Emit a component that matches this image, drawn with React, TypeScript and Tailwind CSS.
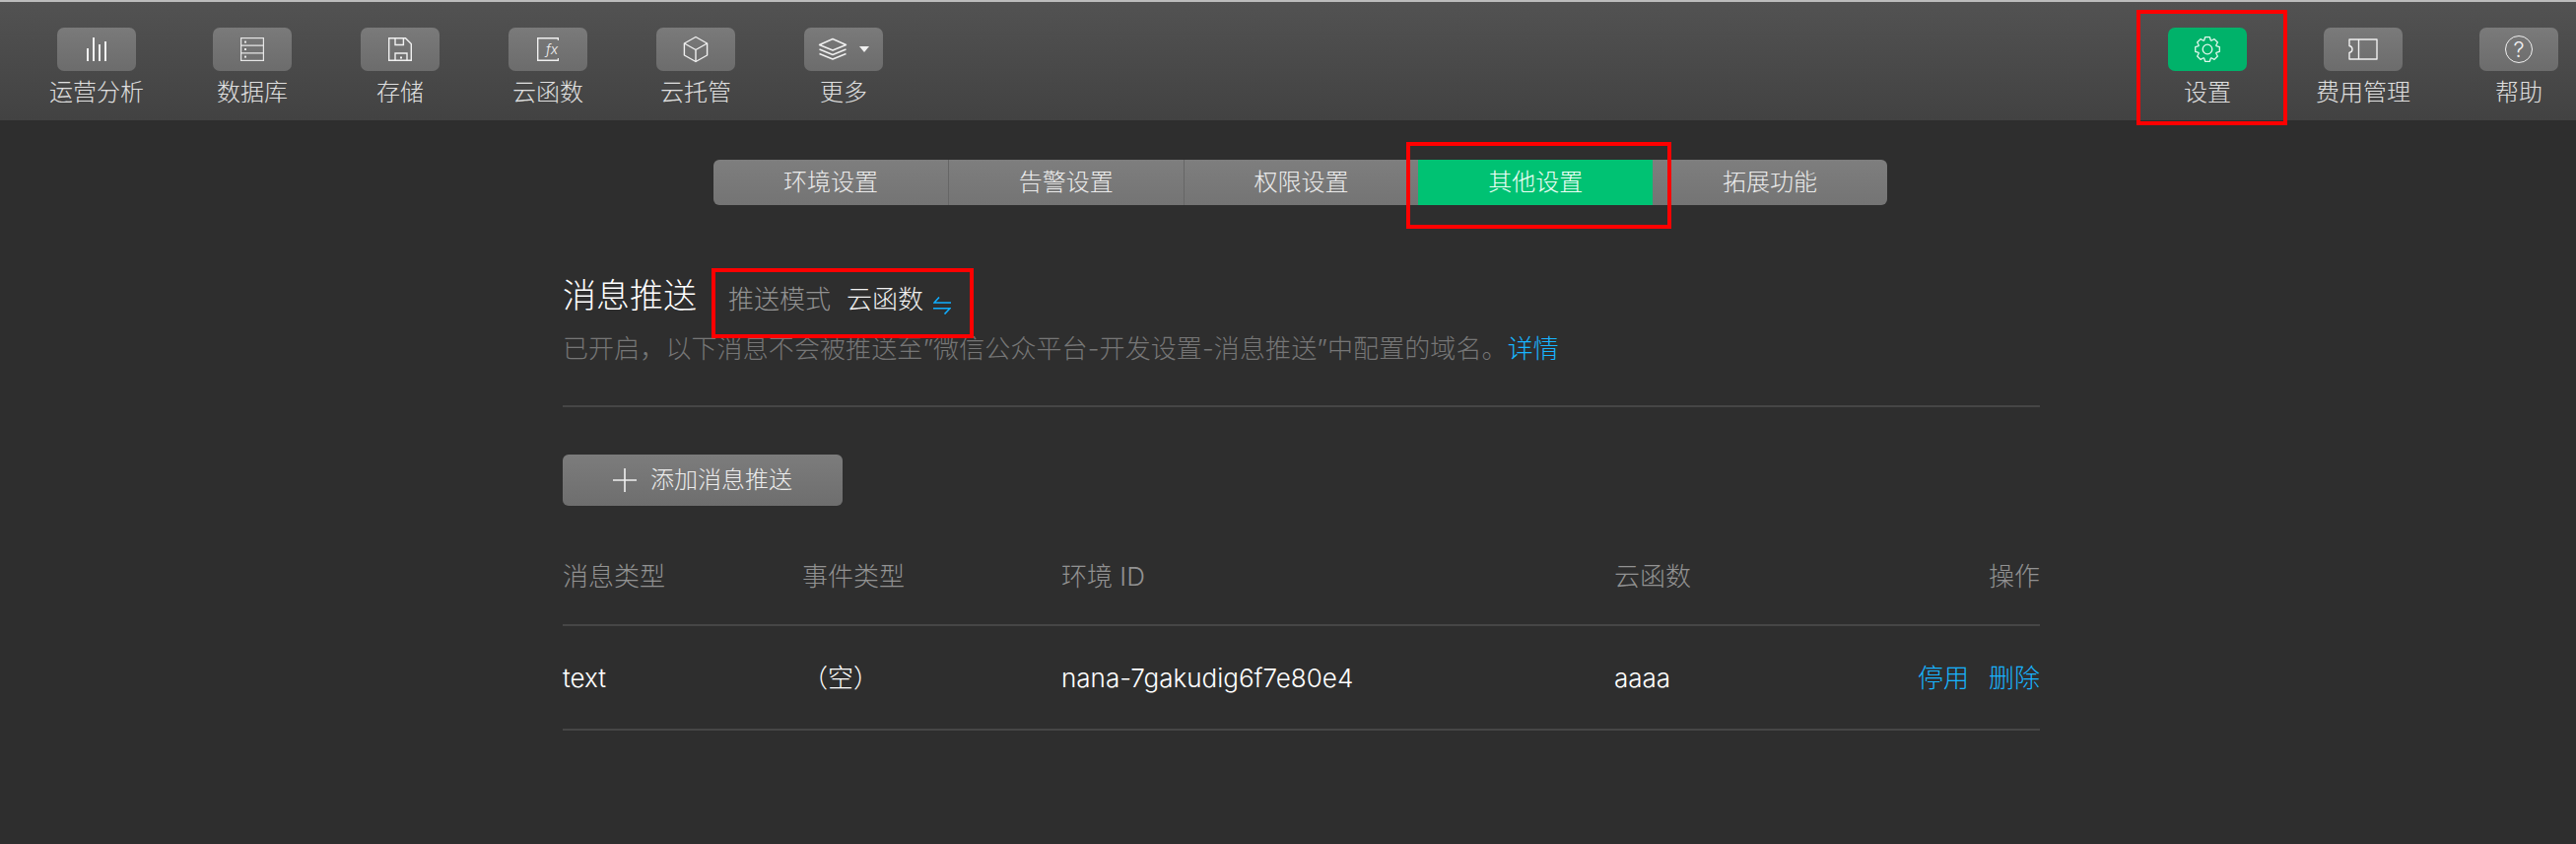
import React from 'react';

// gear outline with 8 teeth
const gearPath = () => {
  const pts: string[] = [];
  const cx = 13, cy = 13;
  for (let i = 0; i < 8; i++) {
    const a = (i * Math.PI) / 4 - Math.PI / 2;
    const spots: [number, number][] = [
      [-0.36, 9.6],
      [-0.19, 12.5],
      [0.19, 12.5],
      [0.36, 9.6],
    ];
    spots.forEach(([d, r]) => {
      pts.push(`${(cx + r * Math.cos(a + d)).toFixed(2)} ${(cy + r * Math.sin(a + d)).toFixed(2)}`);
    });
  }
  return `M${pts.join('L')}Z`;
};

const BarsIcon = () => (
  <svg width="20" height="24" viewBox="0 0 20 24" fill="#f0f0f0">
    <rect x="0" y="11" width="2" height="13" />
    <rect x="6" y="0" width="2" height="24" />
    <rect x="12" y="7" width="2" height="17" />
    <rect x="18" y="4" width="2" height="20" />
  </svg>
);

const ServerIcon = () => (
  <svg width="24" height="24" viewBox="0 0 24 24" fill="none" stroke="#e6e6e6" strokeWidth="1.2">
    <rect x="0.6" y="0.6" width="22.8" height="22.8" />
    <path d="M0.6 8.2H23.4M0.6 15.8H23.4" />
    <rect x="4" y="3.6" width="2" height="2" fill="#e6e6e6" stroke="none" />
    <rect x="4" y="11" width="2" height="2" fill="#e6e6e6" stroke="none" />
    <rect x="4" y="18.6" width="2" height="2" fill="#e6e6e6" stroke="none" />
  </svg>
);

const SaveIcon = () => (
  <svg width="24" height="24" viewBox="0 0 24 24" fill="none" stroke="#f0f0f0" strokeWidth="1.4">
    <path d="M0.7 0.7H17.5L23.3 6.5V23.3H0.7Z" />
    <path d="M7 0.7V7.5H15.4V0.7" />
    <path d="M7 23.3V16H19V23.3" />
    <rect x="12" y="19.5" width="2" height="2" fill="#f0f0f0" stroke="none" />
  </svg>
);

const FxIcon = () => (
  <div className="relative w-[22px] h-[24px]">
    <svg width="22" height="24" viewBox="0 0 22 24" fill="none" stroke="#f0f0f0" strokeWidth="1.4">
      <path d="M21.5 3V0.7H0.7V23.3H21.5V21" />
    </svg>
    <span className="absolute left-[9px] top-[3px] text-[14px] leading-[17px] italic text-[#f0f0f0]">fx</span>
  </div>
);

const CubeIcon = () => (
  <svg width="26" height="28" viewBox="0 0 26 28" fill="none" stroke="#f0f0f0" strokeWidth="1.4" strokeLinejoin="round">
    <path d="M13 1.5L24.6 8V20L13 26.5L1.4 20V8Z" />
    <path d="M1.4 8L13 14.5L24.6 8M13 14.5V26.5" />
  </svg>
);

const LayersIcon = () => (
  <svg width="30" height="24" viewBox="0 0 30 24" fill="none" stroke="#f0f0f0" strokeWidth="1.4" strokeLinejoin="round">
    <path d="M15 1.5L28.5 7.5L15 13L1.5 7.5Z" />
    <path d="M1.5 12L15 17.5L28.5 12" />
    <path d="M1.5 16.5L15 22L28.5 16.5" />
  </svg>
);

const GearIcon = () => (
  <svg width="26" height="26" viewBox="0 0 26 26" fill="none" stroke="#e4f8ee" strokeWidth="1.3" strokeLinejoin="round">
    <path d={gearPath()} />
    <circle cx="13" cy="13" r="4.8" />
  </svg>
);

const TicketIcon = () => (
  <svg width="30" height="22" viewBox="0 0 30 22" fill="none" stroke="#f0f0f0" strokeWidth="1.4" strokeLinejoin="round">
    <path d="M1 1H29V21H1V14.5C3 14 4 12.8 4 11C4 9.2 3 8 1 7.5Z" />
    <path d="M10.5 1V21" />
  </svg>
);

const HelpIcon = () => (
  <div className="w-[28px] h-[28px] rounded-full border-[1.4px] border-[#f0f0f0] flex items-center justify-center">
    <span className="text-[22px] leading-none text-[#f0f0f0]">?</span>
  </div>
);

const navLeft = [
  { label: '运营分析', icon: <BarsIcon />, wide: true },
  { label: '数据库', icon: <ServerIcon /> },
  { label: '存储', icon: <SaveIcon /> },
  { label: '云函数', icon: <FxIcon /> },
  { label: '云托管', icon: <CubeIcon /> },
  {
    label: '更多',
    icon: (
      <div className="flex items-center gap-3">
        <LayersIcon />
        <span className="w-0 h-0 border-x-[5px] border-x-transparent border-t-[6px] border-t-[#f0f0f0]" />
      </div>
    ),
  },
];

const tabs = ['环境设置', '告警设置', '权限设置', '其他设置', '拓展功能'];

const NavItem = ({ label, icon, active, wide }: { label: string; icon: React.ReactNode; active?: boolean; wide?: boolean }) => (
  <div className={`flex flex-col items-center ${wide ? 'w-[96px]' : 'w-[80px]'}`}>
    <div
      className={`w-[80px] h-[44px] rounded-[7px] flex items-center justify-center ${
        active ? 'bg-[#00b26a]' : 'bg-gradient-to-b from-[#7a7a7a] to-[#6c6c6c]'
      }`}
    >
      {icon}
    </div>
    <div className="mt-[5px] text-[24px] leading-[34px] text-[#e0e0e0] whitespace-nowrap">{label}</div>
  </div>
);

const RedBox = ({ className }: { className: string }) => (
  <div className={`absolute border-[4px] border-[#ff0000] ${className}`} />
);

export default function App() {
  return (
    <div className="relative w-[2614px] h-[856px] overflow-hidden bg-[#2e2e2e] font-light font-['Inter','Noto_Sans_CJK_SC',sans-serif]">
      {/* top toolbar */}
      <div className="h-[122px] border-t-2 border-[#bcbcbc] bg-gradient-to-b from-[#525252] to-[#424242] pt-[26px] pl-[50px] pr-[18px] flex justify-between">
        <div className="flex gap-[70px]">
          {navLeft.map((n) => (
            <NavItem key={n.label} label={n.label} icon={n.icon} wide={n.wide} />
          ))}
        </div>
        <div className="flex gap-[70px]">
          <NavItem label="设置" icon={<GearIcon />} active />
          <NavItem label="费用管理" icon={<TicketIcon />} wide />
          <NavItem label="帮助" icon={<HelpIcon />} />
        </div>
      </div>

      {/* segmented tabs */}
      <div className="ml-[724px] mt-[40px] w-[1191px] h-[46px] flex rounded-[6px] overflow-hidden bg-gradient-to-b from-[#7e7e7e] to-[#747474]">
        {tabs.map((t, i) => (
          <div
            key={t}
            className={`flex-1 flex items-center justify-center text-[24px] ${
              i === 3
                ? 'bg-[#00c273] text-[#f0fff7]'
                : `text-[#ececec] ${i < 2 ? 'border-r border-[#666666]' : ''}`
            }`}
          >
            {t}
          </div>
        ))}
      </div>

      <div className="ml-[571px] w-[1499px]">
        {/* heading */}
        <div className="mt-[70px] flex items-center h-[44px]">
          <h2 className="text-[34px] leading-[44px] text-white">消息推送</h2>
          <span className="ml-[32px] mt-[6px] text-[26px] text-[#929292]">推送模式</span>
          <span className="ml-[16px] mt-[6px] text-[26px] text-[#f0f0f0]">云函数</span>
          <svg className="ml-[10px] mt-[20px]" width="18" height="18" viewBox="0 0 18 18" fill="none" stroke="#10aeff" strokeWidth="1.6">
            <path d="M18 6H1L6 0.5" />
            <path d="M0 11.7H17L11.5 17.5" />
          </svg>
        </div>
        <p className="mt-[15px] text-[26px] leading-[34px] tracking-[0.1px] text-[#767676] whitespace-nowrap">
          已开启，以下消息不会被推送至”微信公众平台-开发设置-消息推送”中配置的域名。
          <span className="text-[#18b4ff]">详情</span>
        </p>
        <div className="mt-[40px] h-[2px] bg-[#464646]" />

        {/* add button */}
        <button className="mt-[48px] w-[284px] h-[52px] rounded-[6px] bg-gradient-to-b from-[#7c7c7c] to-[#6e6e6e] flex items-center justify-center gap-[14px] text-[24px] text-[#ececec]">
          <svg width="24" height="24" viewBox="0 0 24 24" stroke="#f0f0f0" strokeWidth="1.6">
            <path d="M12 0V24M0 12H24" />
          </svg>
          添加消息推送
        </button>

        {/* table */}
        <div className="mt-[22px] grid grid-cols-[243px_263px_561px_1fr_auto] items-center h-[100px] text-[26px] text-[#929292] border-b-2 border-[#464646]">
          <div>消息类型</div>
          <div>事件类型</div>
          <div>环境 ID</div>
          <div>云函数</div>
          <div className="text-right">操作</div>
        </div>
        <div className="grid grid-cols-[243px_263px_561px_1fr_auto] items-center h-[106px] text-[26px] text-white border-b-2 border-[#464646]">
          <div>text</div>
          <div>（空）</div>
          <div>nana-7gakudig6f7e80e4</div>
          <div>aaaa</div>
          <div className="flex gap-[20px] text-[#18b4ff]">
            <span>停用</span>
            <span>删除</span>
          </div>
        </div>
      </div>

      {/* red annotation boxes */}
      <RedBox className="left-[2168px] top-[10px] w-[153px] h-[117px]" />
      <RedBox className="left-[1427px] top-[144px] w-[269px] h-[88px]" />
      <RedBox className="left-[722px] top-[272px] w-[266px] h-[71px]" />
    </div>
  );
}
